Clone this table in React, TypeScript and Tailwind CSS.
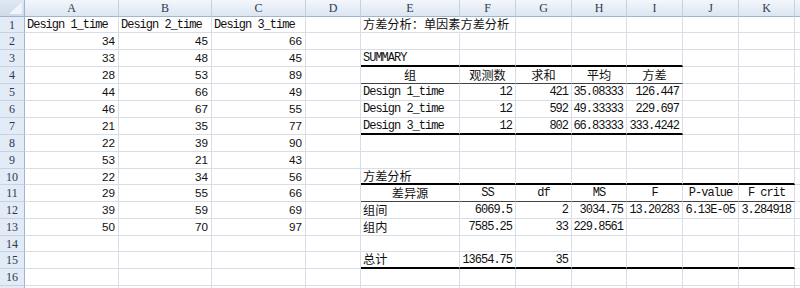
import React from "react";

type Cell = { t: string; a: "l" | "r" | "c"; f: "mono" | "sans" | "cjk" };

const W = [
  "w-[25px]",
  "w-[94px]",
  "w-[93px]",
  "w-[94px]",
  "w-[55px]",
  "w-[99px]",
  "w-[56px]",
  "w-[56px]",
  "w-[55px]",
  "w-[56px]",
  "w-[56px]",
  "w-[56px]",
  "w-[30px]",
];
const LETTERS = ["", "A", "B", "C", "D", "E", "F", "G", "H", "I", "J", "K", ""];
const H = [
  "h-[16px]", "h-[17px]", "h-[17px]", "h-[17px]", "h-[17px]", "h-[17px]", "h-[17px]", "h-[17px]",
  "h-[17px]", "h-[16px]", "h-[17px]", "h-[17px]", "h-[17px]", "h-[16px]", "h-[17px]", "h-[17px]", "h-[17px]",
];

const data: Record<string, Cell> = {};
const set = (r: number, c: number, t: string, a: Cell["a"], f: Cell["f"]) => {
  data[`${r},${c}`] = { t, a, f };
};

const A = [34, 33, 28, 44, 46, 21, 22, 53, 22, 29, 39, 50];
const B = [45, 48, 53, 66, 67, 35, 39, 21, 34, 55, 59, 70];
const C = [66, 45, 89, 49, 55, 77, 90, 43, 56, 66, 69, 97];
set(1, 1, "Design 1_time", "l", "mono");
set(1, 2, "Design 2_time", "l", "mono");
set(1, 3, "Design 3_time", "l", "mono");
A.forEach((v, i) => set(i + 2, 1, String(v), "r", "sans"));
B.forEach((v, i) => set(i + 2, 2, String(v), "r", "sans"));
C.forEach((v, i) => set(i + 2, 3, String(v), "r", "sans"));

set(1, 5, "方差分析：单因素方差分析", "l", "cjk");
set(3, 5, "SUMMARY", "l", "mono");
set(4, 5, "组", "c", "cjk");
set(4, 6, "观测数", "c", "cjk");
set(4, 7, "求和", "c", "cjk");
set(4, 8, "平均", "c", "cjk");
set(4, 9, "方差", "c", "cjk");
const sum = [
  ["Design 1_time", "12", "421", "35.08333", "126.447"],
  ["Design 2_time", "12", "592", "49.33333", "229.697"],
  ["Design 3_time", "12", "802", "66.83333", "333.4242"],
];
sum.forEach((row, i) => {
  row.forEach((v, j) => set(5 + i, 5 + j, v, j === 0 ? "l" : "r", "mono"));
});
set(10, 5, "方差分析", "l", "cjk");
set(11, 5, "差异源", "c", "cjk");
["SS", "df", "MS", "F", "P-value", "F crit"].forEach((v, j) => set(11, 6 + j, v, "c", "mono"));
set(12, 5, "组间", "l", "cjk");
["6069.5", "2", "3034.75", "13.20283", "6.13E-05", "3.284918"].forEach((v, j) => set(12, 6 + j, v, "r", "mono"));
set(13, 5, "组内", "l", "cjk");
["7585.25", "33", "229.8561"].forEach((v, j) => set(13, 6 + j, v, "r", "mono"));
set(15, 5, "总计", "l", "cjk");
["13654.75", "35"].forEach((v, j) => set(15, 6 + j, v, "r", "mono"));

const FONT: Record<Cell["f"], string> = {
  mono: "font-['Liberation_Mono',monospace] text-[12px] tracking-[-1px]",
  sans: "font-['Liberation_Sans',Arial,sans-serif] text-[11.7px]",
  cjk: "font-['Noto_Sans_CJK_SC',sans-serif] text-[12.2px]",
};
const ALIGN: Record<Cell["a"], string> = {
  l: "justify-start pl-[2px]",
  r: "justify-end pr-[3px]",
  c: "justify-center",
};

function bottomClass(r: number, c: number): string {
  if (r === 3 && c >= 5 && c <= 9) return "border-b-2 border-b-black";
  if (r === 4 && c >= 5 && c <= 9) return "border-b border-b-[#444]";
  if (r === 7 && c >= 5 && c <= 9) return "border-b-2 border-b-black";
  if (r === 10 && c >= 5 && c <= 11) return "border-b-2 border-b-black";
  if (r === 11 && c >= 5 && c <= 11) return "border-b border-b-[#444]";
  if (r === 15 && c >= 5 && c <= 11) return "border-b-2 border-b-black";
  return "border-b border-b-[#d8dee8]";
}

function HeaderRow() {
  return (
    <div className="flex h-[17px] shrink-0">
      {W.map((w, i) =>
        i === 0 ? (
          <div
            key={i}
            className={`${w} h-full shrink-0 relative bg-gradient-to-b from-[#dfe7f3] to-[#cfdbeb] border-r border-b border-[#9eb3cd]`}
          >
            <svg className="absolute right-[2px] bottom-[2px]" width="13" height="12" viewBox="0 0 13 12">
              <polygon points="13,0 13,12 0,12" fill="#f1f5fb" />
            </svg>
          </div>
        ) : (
          <div
            key={i}
            className={`${w} h-full shrink-0 flex items-center justify-center bg-gradient-to-b from-[#f3f7fc] to-[#dce5f1] border-r border-r-[#c4d1e1] border-b border-b-[#9eb6ce] font-['Liberation_Serif',serif] text-[12px] text-[#2c3a50]`}
          >
            {LETTERS[i]}
          </div>
        )
      )}
    </div>
  );
}

function Row({ r }: { r: number }) {
  return (
    <div className={`flex ${H[r - 1]} shrink-0`}>
      {W.map((w, c) => {
        if (c === 0) {
          return (
            <div
              key={c}
              className={`${w} h-full shrink-0 flex items-center justify-center bg-[#e3ebf6] border-r border-r-[#9eb6ce] border-b border-b-[#c5d3e4] font-['Liberation_Serif',serif] text-[12px] text-[#2c3a50]`}
            >
              {r <= 16 ? r : ""}
            </div>
          );
        }
        const cell = data[`${r},${c}`];
        const rightBorder = r === 1 && c === 5 ? "border-r border-r-transparent" : "border-r border-r-[#d8dee8]";
        return (
          <div
            key={c}
            className={`${w} h-full shrink-0 flex items-center whitespace-nowrap leading-none text-[#111] ${rightBorder} ${bottomClass(r, c)} ${
              cell ? ALIGN[cell.a] + " " + FONT[cell.f] : ""
            }`}
          >
            {cell ? <span className="relative z-10">{cell.t}</span> : null}
          </div>
        );
      })}
    </div>
  );
}

export default function App() {
  const rows = Array.from({ length: 17 }, (_, i) => i + 1);
  return (
    <div className="w-[800px] h-[288px] overflow-hidden bg-white flex flex-col">
      <HeaderRow />
      {rows.map((r) => (
        <Row key={r} r={r} />
      ))}
    </div>
  );
}
